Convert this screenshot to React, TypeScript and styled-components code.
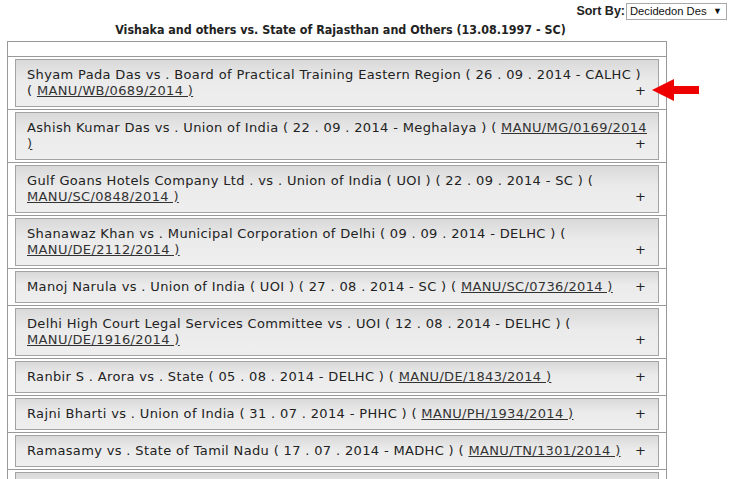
import React from "react";
import styled, { createGlobalStyle } from "styled-components";

const GlobalStyle = createGlobalStyle`
  html, body {
    margin: 0;
    padding: 0;
    background: #ffffff;
  }
  body {
    font-family: "DejaVu Sans", Verdana, sans-serif;
    color: #222;
  }
`;

const Page = styled.div`
  position: relative;
  width: 736px;
  height: 479px;
  overflow: hidden;
`;

const SortBar = styled.div`
  display: flex;
  justify-content: flex-end;
  align-items: center;
  gap: 1px;
  height: 20px;
  padding: 1px 9px 0 0;
`;

const SortLabel = styled.span`
  font-family: "Liberation Sans", Arial, sans-serif;
  font-weight: bold;
  font-size: 12.5px;
  color: #222;
`;

const SortSelect = styled.div`
  display: flex;
  align-items: center;
  box-sizing: border-box;
  width: 101px;
  height: 17px;
  padding: 0 0 0 3px;
  border: 1px solid #a9a9a9;
  font-family: "Liberation Sans", Arial, sans-serif;
  font-size: 11.2px;
  color: #111;
  background: #fff;
  white-space: nowrap;
  overflow: hidden;
`;

const SelectText = styled.span`
  width: 77px;
  overflow: hidden;
`;

const Caret = styled.span`
  font-size: 9px;
  margin-left: 6px;
`;

const Title = styled.div`
  width: 681px;
  text-align: center;
  font-family: "DejaVu Sans Condensed", "DejaVu Sans", sans-serif;
  font-stretch: condensed;
  font-weight: bold;
  font-size: 12.4px;
  line-height: 16px;
  color: #222;
  padding-top: 1px;
`;

const Container = styled.div`
  margin: 3px 0 0 7px;
  width: 658px;
  border: 1px solid #999;
  border-bottom: none;
`;

const HeaderRow = styled.div`
  height: 14px;
  border-bottom: 1px solid #999;
`;

const Row = styled.div`
  padding: 2px 7px 2px 7px;
  border-bottom: 1px solid #999;
`;

const Box = styled.div`
  border: 1px solid #a3a3a3;
  background: linear-gradient(#d9d9d9 0%, #ebebeb 45%, #eeeeee 100%);
  padding: 7px 8px 7px 11px;
  font-size: 13px;
  letter-spacing: 0.35px;
  line-height: 16px;
  color: #222;
  overflow: hidden;
`;

const Citation = styled.a`
  color: #333;
  text-decoration: underline;
`;

const Plus = styled.span`
  float: right;
  padding: 0 4px 0 8px;
  font-size: 13px;
  letter-spacing: 0;
`;

const Arrow = styled.svg`
  position: absolute;
  left: 652px;
  top: 79px;
`;

type Case = {
  title: string;
  open: string;
  citation: string;
};

const cases: Case[] = [
  { title: "Shyam Pada Das vs . Board of Practical Training Eastern Region ( 26 . 09 . 2014 - CALHC ) ", open: "(\u00a0", citation: "MANU/WB/0689/2014 )" },
  { title: "Ashish Kumar Das vs . Union of India ( 22 . 09 . 2014 - Meghalaya ) ", open: "( ", citation: "MANU/MG/0169/2014 )" },
  { title: "Gulf Goans Hotels Company Ltd . vs . Union of India ( UOI ) ( 22 . 09 . 2014 - SC ) ", open: "( ", citation: "MANU/SC/0848/2014 )" },
  { title: "Shanawaz Khan vs . Municipal Corporation of Delhi ( 09 . 09 . 2014 - DELHC ) ", open: "( ", citation: "MANU/DE/2112/2014 )" },
  { title: "Manoj Narula vs . Union of India ( UOI ) ( 27 . 08 . 2014 - SC ) ", open: "( ", citation: "MANU/SC/0736/2014 )" },
  { title: "Delhi High Court Legal Services Committee vs . UOI ( 12 . 08 . 2014 - DELHC ) ", open: "( ", citation: "MANU/DE/1916/2014 )" },
  { title: "Ranbir S . Arora vs . State ( 05 . 08 . 2014 - DELHC ) ", open: "( ", citation: "MANU/DE/1843/2014 )" },
  { title: "Rajni Bharti vs . Union of India ( 31 . 07 . 2014 - PHHC ) ", open: "( ", citation: "MANU/PH/1934/2014 )" },
  { title: "Ramasamy vs . State of Tamil Nadu ( 17 . 07 . 2014 - MADHC ) ", open: "( ", citation: "MANU/TN/1301/2014 )" },
  { title: "Ramesh Kumar vs . State ( 10 . 07 . 2014 - DELHC ) ", open: "( ", citation: "MANU/DE/1622/2014 )" },
];

const App: React.FC = () => {
  return (
    <Page>
      <GlobalStyle />
      <SortBar>
        <SortLabel>Sort By:</SortLabel>
        <SortSelect>
          <SelectText>Decidedon Descending</SelectText>
          <Caret>▼</Caret>
        </SortSelect>
      </SortBar>
      <Title>Vishaka and others vs. State of Rajasthan and Others (13.08.1997 - SC)</Title>
      <Container>
        <HeaderRow />
        {cases.map((c, i) => (
          <Row key={i}>
            <Box>
              {c.title}
              {c.open}
              <Citation>{c.citation}</Citation>
              <Plus>+</Plus>
            </Box>
          </Row>
        ))}
      </Container>
      <Arrow width="48" height="22" viewBox="0 0 48 22">
        <polygon points="0,11 22,0 22,7 47,7 47,15 22,15 22,22" fill="#ee0000" />
      </Arrow>
    </Page>
  );
};

export default App;
